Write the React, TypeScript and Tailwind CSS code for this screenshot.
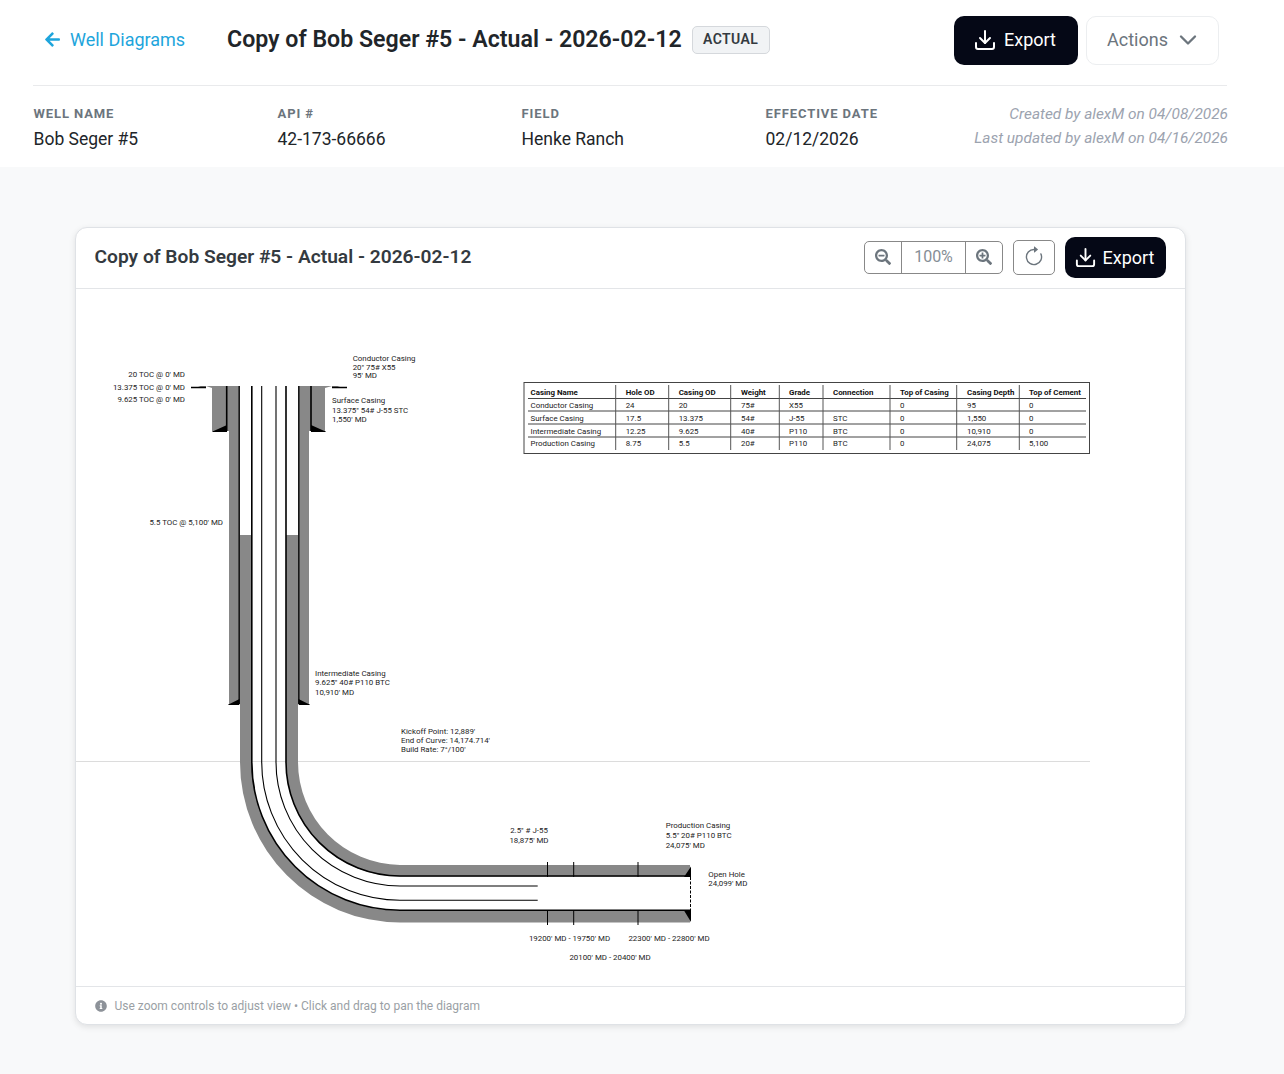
import { ChevronDown, Download } from "lucide-react"
import { FaArrowLeft, FaInfoCircle, FaSearchMinus, FaSearchPlus } from "react-icons/fa"
import { BsArrowClockwise } from "react-icons/bs"

const meta = [
  { label: "WELL NAME", value: "Bob Seger #5" },
  { label: "API #", value: "42-173-66666" },
  { label: "FIELD", value: "Henke Ranch" },
  { label: "EFFECTIVE DATE", value: "02/12/2026" },
]

const columns = [
  { x: 530.5, title: "Casing Name", cells: ["Conductor Casing", "Surface Casing", "Intermediate Casing", "Production Casing"] },
  { x: 625.7, title: "Hole OD", cells: ["24", "17.5", "12.25", "8.75"] },
  { x: 678.7, title: "Casing OD", cells: ["20", "13.375", "9.625", "5.5"] },
  { x: 741, title: "Weight", cells: ["75#", "54#", "40#", "20#"] },
  { x: 789, title: "Grade", cells: ["X55", "J-55", "P110", "P110"] },
  { x: 833, title: "Connection", cells: ["", "STC", "BTC", "BTC"] },
  { x: 900, title: "Top of Casing", cells: ["0", "0", "0", "0"] },
  { x: 967, title: "Casing Depth", cells: ["95", "1,550", "10,910", "24,075"] },
  { x: 1029, title: "Top of Cement", cells: ["0", "0", "0", "5,100"] },
]

const rowBaselines = [408, 421, 434, 446]
const rowLines = [398.5, 411, 424, 437]
const colLines = [615.7, 668.7, 730.7, 779.3, 823, 890, 956.7, 1019.3]

type Label = { x: number; lines: [number, string][]; anchor?: "start" | "middle" | "end" }

const labels: Label[] = [
  { x: 185, anchor: "end", lines: [[377, "20 TOC @ 0' MD"], [389.7, "13.375 TOC @ 0' MD"], [401.7, "9.625 TOC @ 0' MD"]] },
  { x: 352.7, lines: [[360.7, "Conductor Casing"], [369.7, "20\" 75# X55"], [378.3, "95' MD"]] },
  { x: 332, lines: [[402.7, "Surface Casing"], [412.7, "13.375\" 54# J-55 STC"], [422, "1,550' MD"]] },
  { x: 223, anchor: "end", lines: [[525, "5.5 TOC @ 5,100' MD"]] },
  { x: 315, lines: [[675.7, "Intermediate Casing"], [684.7, "9.625\" 40# P110 BTC"], [694.7, "10,910' MD"]] },
  { x: 401, lines: [[733.7, "Kickoff Point: 12,889'"], [742.7, "End of Curve: 14,174.714'"], [751.7, "Build Rate: 7°/100'"]] },
  { x: 529, anchor: "middle", lines: [[832.7, "2.5\" # J-55"], [842.7, "18,875' MD"]] },
  { x: 665.7, lines: [[828.3, "Production Casing"], [837.7, "5.5\" 20# P110 BTC"], [847.7, "24,075' MD"]] },
  { x: 708.3, lines: [[876.7, "Open Hole"], [885.7, "24,099' MD"]] },
  { x: 569.5, anchor: "middle", lines: [[940.7, "19200' MD - 19750' MD"]] },
  { x: 669, anchor: "middle", lines: [[940.7, "22300' MD - 22800' MD"]] },
  { x: 610, anchor: "middle", lines: [[959.7, "20100' MD - 20400' MD"]] },
]

// curve centre shared by every string
const CX = 400
const CY = 762

// vertical left at x, bends round the centre, ends at endX on the lateral
function bend(x: number, top: number, endX: number) {
  const r = CX - x
  return `M${x} ${top}V${CY}A${r} ${r} 0 0 0 ${CX} ${CY + r}H${endX}`
}

function WellDiagram() {
  return (
    <svg viewBox="75 289 1111 697" className="block w-[1111px] h-[697px]">
      <line x1="75" y1="761.5" x2="1090" y2="761.5" stroke="#dcdcdc" />

      {/* conductor and surface annulus */}
      <path d="M206 386H228V431H212V388ZM310 386H332L325 388V431H310Z" fill="#888" />
      {/* flange lines */}
      <path d="M191 387.5H206M332 387.5H347" stroke="#000" strokeWidth="1.5" />
      <path d="M198 386.5H206V388ZM332 386.5H340L332 388Z" fill="#000" />

      {/* intermediate annulus */}
      <path d="M229 431H239V704H229ZM299 431H309V704H299Z" fill="#888" />
      <path d="M228 386H239V431H228ZM299 386H310V431H299Z" fill="#888" />

      {/* production annulus, cement top at 5,100 */}
      <path d={`M240 535H252V762A148 148 0 0 0 400 910.5H690V922.5H400A160.5 160.5 0 0 1 240 762Z`} fill="#888" />
      <path d={`M286 535H298V762A103 103 0 0 0 400 865H690V876.5H400A114 114 0 0 1 286 762Z`} fill="#888" />

      {/* casing walls */}
      <path d="M226.7 386V431M311 386V431" stroke="#000" strokeWidth="1.6" fill="none" />
      <path d="M239.2 386V704M298.8 386V704" stroke="#000" strokeWidth="1.4" fill="none" />
      <path d={bend(251.8, 386, 690)} stroke="#000" strokeWidth="1.6" fill="none" />
      <path d={bend(286, 386, 690)} stroke="#000" strokeWidth="1.6" fill="none" />
      <path d={bend(261.7, 386, 537.7)} stroke="#000" strokeWidth="1.1" fill="none" />
      <path d={bend(276, 386, 537.7)} stroke="#000" strokeWidth="1.1" fill="none" />

      {/* shoes */}
      <path d="M212.5 431.5H227V425ZM311 425V431.5H325.5Z" fill="#000" />
      <path d="M228.5 704.5H239.5V699ZM298.5 699V704.5H309.5Z" fill="#000" />
      <path d="M684 877H691V866.5ZM684 910.5H691V922Z" fill="#000" />
      <path d="M212.5 431.5H227M311 431.5H325.5M228.5 704.5H239M299 704.5H309.5" stroke="#000" />

      {/* perforations */}
      <path d="M547.5 862V877M573.7 862V877M638 862V877M547.5 910V925M573.7 910V925M638 910V925" stroke="#000" strokeWidth="1" />
      <line x1="690.5" y1="877" x2="690.5" y2="911" stroke="#000" strokeDasharray="3 1.5" />

      {labels.map((l) =>
        l.lines.map(([y, t]) => (
          <text key={t} x={l.x} y={y} textAnchor={l.anchor ?? "start"} fontSize="7.9" fill="#222" fontFamily="Roboto, sans-serif">
            {t}
          </text>
        )),
      )}

      {/* casing table */}
      <rect x="524" y="382.5" width="565.5" height="71" fill="#fff" stroke="#444" strokeWidth="1" />
      {rowLines.map((y) => (
        <line key={y} x1="528" y1={y} x2="1086" y2={y} stroke="#444" strokeWidth="1" />
      ))}
      {colLines.map((x) => (
        <line key={x} x1={x} y1="385" x2={x} y2="450" stroke="#555" strokeWidth="1" />
      ))}
      {columns.map((c) => (
        <g key={c.title} fontSize="7.9" fontFamily="Roboto, sans-serif" fill="#222">
          <text x={c.x} y="395" fontWeight="700" fill="#111">
            {c.title}
          </text>
          {c.cells.map((cell, i) => (
            <text key={i} x={c.x} y={rowBaselines[i]}>
              {cell}
            </text>
          ))}
        </g>
      ))}
    </svg>
  )
}

export default function App() {
  return (
    <div className="min-h-[1074px] bg-[#f8f9fa] font-['Roboto',sans-serif]">
      <div className="bg-white h-[167px] pl-[33px] pr-[57px]">
        <div className="h-[86px] border-b border-[#e9eaec] flex items-center pl-[11px] pr-2 pb-1">
          <a className="flex items-center gap-[9px] text-[18px] text-[#1ea5dc] w-[183px] pb-[2px]">
            <FaArrowLeft className="w-[17px] h-[17px]" />
            Well Diagrams
          </a>
          <h1 className="text-[23.15px] font-semibold text-[#212529] leading-none pb-[2px]">Copy of Bob Seger #5 - Actual - 2026-02-12</h1>
          <span className="ml-[10px] h-[28px] w-[78px] -mt-[2px] flex items-center justify-center rounded-[5px] border border-[#d5d8dc] bg-[#f1f3f5] text-[14px] font-semibold tracking-[0.4px] text-[#343a40]">
            ACTUAL
          </span>
          <button className="ml-auto h-[49px] w-[124px] flex items-center justify-center gap-[7px] pr-[3px] pb-[2px] rounded-[10px] bg-[#050816] text-white text-[18px]">
            <Download className="w-[24px] h-[24px]" strokeWidth={2} />
            Export
          </button>
          <button className="ml-2 h-[49px] w-[133px] flex items-center pl-[20px] gap-[6px] pb-[2px] rounded-[10px] border border-[#eceef0] bg-white text-[18px] text-[#6c757d]">
            Actions
            <ChevronDown className="w-[28px] h-[28px]" strokeWidth={2} />
          </button>
        </div>
        <div className="flex pt-[20px] pl-[0.5px] -mr-px">
          {meta.map((m) => (
            <div key={m.label} className="w-[244px]">
              <div className="text-[13px] font-bold tracking-[0.9px] text-[#6c757d] leading-[16px]">{m.label}</div>
              <div className="text-[17.5px] text-[#212529] leading-[22px] mt-[6px]">{m.value}</div>
            </div>
          ))}
          <div className="flex-1 -ml-[100px] text-right text-[15.4px] italic text-[#9ca3af] leading-[24px] -mt-[4px] whitespace-nowrap">
            <div>Created by alexM on 04/08/2026</div>
            <div>Last updated by alexM on 04/16/2026</div>
          </div>
        </div>
      </div>

      <div className="ml-[75px] mt-[60px] w-[1111px] h-[798px] bg-white border border-[#dfe2e6] rounded-[12px] shadow-[0_2px_6px_rgba(0,0,0,0.1)] flex flex-col overflow-hidden box-border">
        <div className="h-[61px] shrink-0 border-b border-[#e3e5e8] flex items-center pl-[18.5px] pr-[19px] pb-[2px]">
          <h2 className="text-[19.2px] font-semibold text-[#343a40]">Copy of Bob Seger #5 - Actual - 2026-02-12</h2>
          <div className="ml-auto flex h-[33px] w-[139px] border border-[#888] rounded-[5px] text-[#6c757d]">
            <div className="w-[37px] flex items-center justify-center border-r border-[#888]">
              <FaSearchMinus className="w-[16px] h-[16px]" />
            </div>
            <div className="flex-1 flex items-center justify-center text-[16px] text-[#868e96]">100%</div>
            <div className="w-[37px] flex items-center justify-center border-l border-[#888]">
              <FaSearchPlus className="w-[16px] h-[16px]" />
            </div>
          </div>
          <div className="ml-[10px] h-[35px] w-[42px] flex items-center justify-center border border-[#888] rounded-[5px] text-[#6c757d]">
            <BsArrowClockwise className="w-[22px] h-[22px]" />
          </div>
          <button className="ml-[10px] h-[41px] w-[101px] flex items-center justify-center gap-[6px] pr-[3px] rounded-[10px] bg-[#050816] text-white text-[18px]">
            <Download className="w-[23px] h-[23px]" strokeWidth={2} />
            Export
          </button>
        </div>
        <div className="h-[697px] shrink-0 -ml-px">
          <WellDiagram />
        </div>
        <div className="flex-1 border-t border-[#e3e5e8] flex items-center gap-[8px] pl-[18.5px] text-[12px] text-[#9a9fa5]">
          <FaInfoCircle className="w-[12px] h-[12px] text-[#8d9299]" />
          Use zoom controls to adjust view • Click and drag to pan the diagram
        </div>
      </div>
    </div>
  )
}
